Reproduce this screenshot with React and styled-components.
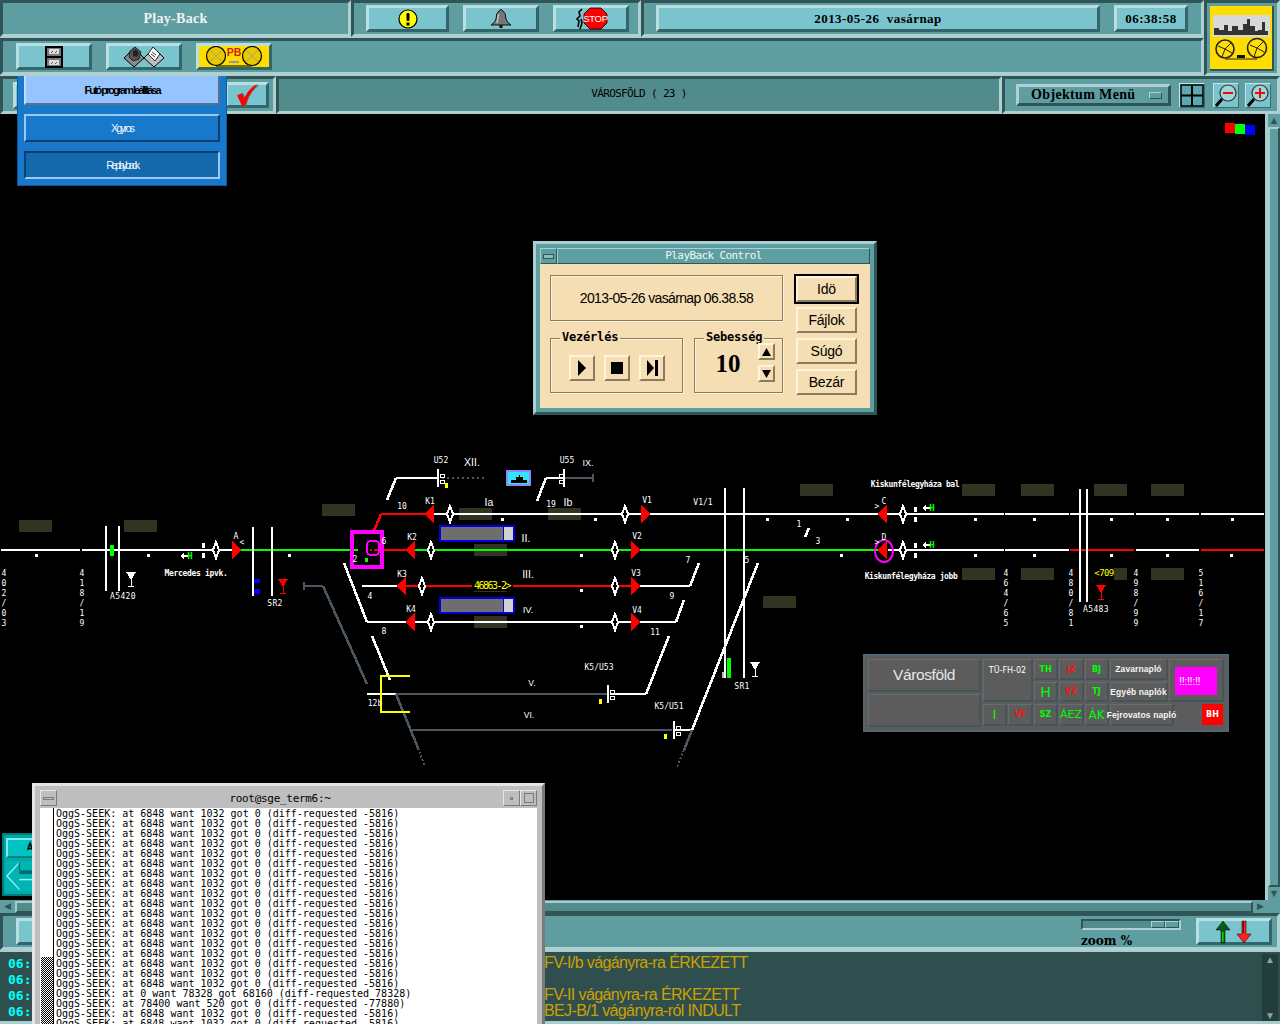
import styled, { createGlobalStyle, css } from 'styled-components';

const GlobalStyle = createGlobalStyle`
  html, body { margin: 0; padding: 0; background: #000; }
  body { font-family: "Liberation Sans", sans-serif; }
`;

const raised = (light, dark, w = 3) => css`
  border-style: solid;
  border-width: ${w}px;
  border-color: ${light} ${dark} ${dark} ${light};
  box-sizing: border-box;
`;

const Screen = styled.div`
  position: relative;
  width: 1280px;
  height: 1024px;
  overflow: hidden;
  background: #5f9ea0;
  display: flex;
  flex-direction: column;
`;

const TopGrid = styled.div`
  display: flex;
  height: 76px;
  flex: none;
`;
const TopLeft = styled.div`
  width: 1204px;
  display: flex;
  flex-direction: column;
`;
const TopRow = styled.div`
  display: flex;
  height: 38px;
  background: #a8cdce;
`;
const Panel = styled.div`
  ${raised('#2f5556', '#aed0d1')}
  background: ${p => p.$dark ? '#528b8b' : '#5f9ea0'};
  height: ${p => p.$h || 38}px;
  width: ${p => p.$w ? p.$w + 'px' : 'auto'};
  flex: ${p => p.$w ? 'none' : 1};
  display: flex;
  align-items: center;
  padding-left: ${p => p.$pl || 0}px;
  gap: ${p => p.$gap || 0}px;
  justify-content: ${p => p.$center ? 'center' : 'flex-start'};
`;
const Title = styled.span`
  font: bold 14px "Liberation Serif", serif;
  letter-spacing: 0.3px;
  color: #f2f2f2;
`;
const Button = styled.div`
  ${raised('#b9dfe3', '#33666a')}
  background: ${p => p.$yellow ? '#ffdd00' : '#7ac5cd'};
  width: ${p => p.$w || 76}px;
  height: ${p => p.$h || 27}px;
  flex: none;
  display: flex;
  align-items: center;
  justify-content: center;
`;
const DateText = styled.span`
  font: bold 13px "Liberation Serif", serif;
  letter-spacing: 0.45px;
  color: #000;
  white-space: pre;
`;
const LogoPanel = styled(Panel)`
  width: 76px;
  height: 76px;
  flex: none;
  padding: 4px 3px 3px 3px;
  justify-content: center;
`;
const LogoFace = styled.div`
  width: 62px;
  height: 63px;
  background: #ffdd00;
  border-right: 2px solid #2f5556;
  border-bottom: 2px solid #2f5556;
  display: flex;
`;
const ThirdRow = styled.div`
  display: flex;
  height: 38px;
  flex: none;
  background: #a8cdce;
`;
const RegionText = styled.span`
  font: 11px "DejaVu Sans Mono", monospace;
  letter-spacing: -0.65px;
  color: #000;
  white-space: pre;
  padding-bottom: 4px;
`;
const OptionMenu = styled.div`
  ${raised('#aed0d1', '#2f5556')}
  width: 155px;
  height: 22px;
  display: flex;
  align-items: center;
  justify-content: space-between;
  padding: 0 6px 0 12px;
  font: bold 14px "Liberation Serif", serif;
  letter-spacing: 0.35px;
  margin-right: 8px;
`;
const OptionMark = styled.i`
  ${raised('#aed0d1', '#2f5556', 1)}
  width: 13px;
  height: 7px;
  background: #5f9ea0;
`;
const IconButton = styled.div`
  ${raised('#c4e3e6', '#3a6d70', 1)}
  width: 26px;
  height: 25px;
  background: #7ac5cd;
  margin-right: ${p => p.$mr || 0}px;
  flex: none;
  display: flex;
`;

const Middle = styled.div`
  display: flex;
  height: 786px;
  flex: none;
`;
const Canvas = styled.div`
  width: 1265px;
  height: 786px;
  background: #000;
  flex: none;
`;
const VScroll = styled.div`
  width: 15px;
  background: #528b8b;
  border-left: 3px solid #a8cdce;
  box-sizing: border-box;
  display: flex;
  flex-direction: column;
`;
const VArrow = styled.div`
  height: 13px;
  flex: none;
  background: #5f9ea0;
  color: #2f5556;
  font-size: 11px;
  line-height: 13px;
  text-align: center;
`;
const VThumb = styled.div`
  ${raised('#a8cdce', '#2f5556', 2)}
  flex: 1;
  background: #5f9ea0;
`;
const HScroll = styled.div`
  height: 13px;
  flex: none;
  display: flex;
  align-items: center;
  padding: 0 14px 0 2px;
  background: #5f9ea0;
  gap: 2px;
`;
const HArrow = styled.div`
  width: 11px;
  height: 11px;
  color: #2f5556;
  font-size: 9px;
  line-height: 11px;
  text-align: center;
  flex: none;
`;
const HThumb = styled.div`
  ${raised('#a8cdce', '#2f5556', 2)}
  flex: 1;
  height: 12px;
  background: #528b8b;
`;
const Toolbar = styled.div`
  ${raised('#2f5556', '#aed0d1')}
  height: 37px;
  flex: none;
  display: flex;
  align-items: center;
  padding: 0 5px 0 13px;
  background: #5f9ea0;
`;
const ZoomBox = styled.div`
  margin-left: auto;
  width: 100px;
  margin-right: 15px;
  padding-top: 3px;
  display: flex;
  flex-direction: column;
  gap: 5px;
`;
const Slider = styled.div`
  ${raised('#2f5556', '#aed0d1', 2)}
  width: 100px;
  height: 11px;
  background: #528b8b;
  display: flex;
  justify-content: flex-end;
`;
const SliderThumb = styled.i`
  ${raised('#aed0d1', '#2f5556', 1)}
  width: 14px;
  height: 7px;
  background: #5f9ea0;
`;
const ZoomLabel = styled.span`
  font: bold 12px "DejaVu Serif", serif;
  color: #000;
  line-height: 12px;
`;
const Log = styled.div`
  flex: 1;
  background: #2f4f4f;
  border-top: 2px solid #a8cdce;
  border-bottom: 3px solid #a8cdce;
  padding-top: 3px;
  display: flex;
  position: relative;
`;
const LogLines = styled.div`
  display: flex;
  flex-direction: column;
`;
const LogLine = styled.div`
  display: flex;
  height: 16px;
  align-items: center;
`;
const LogTime = styled.span`
  width: 544px;
  padding-left: 8px;
  box-sizing: border-box;
  font: bold 13px "DejaVu Sans Mono", monospace;
  color: #00ffff;
`;
const LogMessage = styled.span`
  font: 16px "Liberation Sans", sans-serif;
  letter-spacing: -0.62px;
  color: #cda000;
  white-space: pre;
`;
const LogScroll = styled.div`
  position: absolute;
  right: 2px;
  top: 2px;
  bottom: 0;
  width: 16px;
  background: #233c3c;
  display: flex;
  flex-direction: column;
  justify-content: space-between;
  align-items: center;
  color: #7fa8a8;
  font-size: 10px;
`;

/* floating parts */
const Menu = styled.div`
  position: absolute;
  left: 17px;
  top: 76px;
  width: 210px;
  height: 110px;
  box-sizing: border-box;
  background: #1878cc;
  border: 1px solid #0f5a9c;
  border-top: none;
  padding: 0 6px;
  display: flex;
  flex-direction: column;
  gap: 9px;
`;
const MenuItem = styled.div`
  height: ${p => p.$h || 28}px;
  box-sizing: border-box;
  border-style: solid;
  border-width: 2px;
  border-top-width: ${p => p.$first ? 0 : 2}px;
  border-color: ${p => p.$pressed ? '#0a3f70 #9cc8f0 #9cc8f0 #0a3f70' : p.$first ? '#b8d8ff #5a7090 #5a7090 #c4deff' : '#9cc8f0 #0a3f70 #0a3f70 #9cc8f0'};
  background: ${p => p.$first ? '#96c4ff' : p.$pressed ? '#1468ac' : '#1878cc'};
  color: ${p => p.$first ? '#000' : '#e8f4ff'};
  display: flex;
  align-items: center;
  justify-content: center;
  font: ${p => p.$first ? 'bold' : 'normal'} 11px "Liberation Sans", sans-serif;
  letter-spacing: ${p => p.$ls ?? -2}px;
  white-space: pre;
`;

const Dialog = styled.div`
  position: absolute;
  left: 533px;
  top: 241px;
  width: 344px;
  height: 174px;
  box-sizing: border-box;
  background: #5f9ea0;
  border-style: solid;
  border-width: 3px;
  border-color: #a8d0d2 #2f5556 #2f5556 #a8d0d2;
  padding: 4px;
  display: flex;
  flex-direction: column;
`;
const DialogTitle = styled.div`
  height: 16px;
  flex: none;
  display: flex;
  align-items: center;
  font: 11px "DejaVu Sans Mono", monospace;
  letter-spacing: -0.6px;
  color: #f0f8f8;
`;
const DialogMenuBtn = styled.i`
  ${raised('#a8d0d2', '#2f5556', 1)}
  width: 17px;
  height: 16px;
  display: flex;
  align-items: center;
  justify-content: center;
  &::after { content: ''; width: 9px; height: 3px; border: 1px solid #2f5556; background: #8fbcbe; }
`;
const DialogTitleText = styled.span`
  ${raised('#a8d0d2', '#2f5556', 1)}
  flex: 1;
  height: 16px;
  line-height: 14px;
  text-align: center;
`;
const DialogBody = styled.div`
  flex: 1;
  background: #f5deb3;
  padding: 10px 12px 0 10px;
  display: flex;
  gap: 11px;
`;
const DialogLeft = styled.div`
  width: 233px;
  margin-top: 1px;
  display: flex;
  flex-direction: column;
  gap: 17px;
`;
const Etched = styled.div`
  border: 1px solid #8b7b5e;
  box-shadow: 1px 1px 0 #fff3d8, inset 1px 1px 0 #fff3d8;
  box-sizing: border-box;
`;
const Stamp = styled(Etched)`
  height: 46px;
  display: flex;
  align-items: center;
  justify-content: center;
  font: 14px "Liberation Sans", sans-serif;
  letter-spacing: -0.65px;
  color: #000;
`;
const GroupRow = styled.div`
  display: flex;
  gap: 11px;
`;
const Group = styled(Etched)`
  position: relative;
  width: ${p => p.$w}px;
  height: 55px;
  display: flex;
  align-items: center;
  gap: ${p => p.$gap || 0}px;
  padding: 4px 0 0 ${p => p.$pl || 0}px;
`;
const GroupLabel = styled.span`
  position: absolute;
  left: ${p => p.$l}px;
  top: -9px;
  background: #f5deb3;
  padding: 0 2px;
  font: bold 12px "DejaVu Sans Mono", monospace;
  letter-spacing: -0.2px;
  line-height: 14px;
  white-space: pre;
`;
const TapeBtn = styled.div`
  ${raised('#fff3d8', '#8b7b5e', 2)}
  background: #f5deb3;
  width: 26px;
  height: 26px;
  display: flex;
  align-items: center;
  justify-content: center;
`;
const Speed = styled.span`
  font: bold 25px "Liberation Serif", serif;
  width: 66px;
  text-align: center;
  margin-top: -7px;
`;
const SpinCol = styled.div`
  position: absolute;
  left: 63px;
  top: 4px;
  display: flex;
  flex-direction: column;
  gap: 5px;
`;
const SpinBtn = styled(TapeBtn)`
  width: 17px;
  height: 17px;
`;
const DialogButtons = styled.div`
  flex: none;
  width: 65px;
  display: flex;
  flex-direction: column;
  align-items: center;
  gap: 5px;
`;
const DefaultRing = styled.div`
  border: 2px solid #000;
  margin-bottom: -2px;
`;
const DlgButton = styled.div`
  ${raised('#fff3d8', '#8b7b5e', 2)}
  width: ${p => p.$w || 61}px;
  height: ${p => p.$h || 26}px;
  background: #f5deb3;
  font: 14px "Liberation Sans", sans-serif;
  letter-spacing: -0.2px;
  color: #000;
  display: flex;
  align-items: center;
  justify-content: center;
`;

const Terminal = styled.div`
  position: absolute;
  left: 32px;
  top: 783px;
  width: 513px;
  height: 260px;
  box-sizing: border-box;
  background: #bebebe;
  border-style: solid;
  border-width: 3px;
  border-color: #e4e4e4 #7a7a7a #7a7a7a #e4e4e4;
  padding: 4px 5px 0 5px;
  display: flex;
  flex-direction: column;
`;
const TermTitle = styled.div`
  height: 16px;
  flex: none;
  display: flex;
  align-items: center;
  margin-bottom: 2px;
  font: 11px "DejaVu Sans Mono", monospace;
  letter-spacing: -0.3px;
`;
const TermBtn = styled.i`
  ${raised('#e8e8e8', '#7a7a7a', 1)}
  width: ${p => p.$w || 17}px;
  height: 16px;
  flex: none;
  display: flex;
  align-items: center;
  justify-content: center;
  &::after {
    content: '';
    width: ${p => p.$mw}px;
    height: ${p => p.$mh}px;
    border: 1px solid #7a7a7a;
  }
`;
const TermTitleText = styled.span`
  flex: 1;
  text-align: center;
  font-style: normal;
`;
const TermBody = styled.div`
  flex: 1;
  background: #fff;
  display: flex;
  overflow: hidden;
`;
const TermGutter = styled.div`
  width: 13px;
  flex: none;
  border-right: 1px solid #000;
  display: flex;
  flex-direction: column;
  justify-content: flex-end;
`;
const TermThumb = styled.div`
  height: 83px;
  margin-left: 1px;
  background: repeating-conic-gradient(#000 0 25%, #fff 0 50%) 0 0 / 2px 2px;
`;
const TermText = styled.pre`
  margin: 0;
  padding: 1px 0 0 2px;
  font: 10px/10px "DejaVu Sans Mono", monospace;
  color: #000;
`;

const InfoPanel = styled.div`
  position: absolute;
  left: 863px;
  top: 654px;
  width: 366px;
  height: 78px;
  box-sizing: border-box;
  background: #5c5c5c;
  border: 2px solid #4e6672;
  padding: 3px;
  display: flex;
  gap: 2px;
`;
const InfoLeft = styled.div`
  width: 113px;
  display: flex;
  flex-direction: column;
  gap: 2px;
`;
const cellBevel = css`
  border: 1px solid;
  border-width: 1px 2px 2px 1px;
  border-color: #6c6c6c #46545c #46545c #6c6c6c;
  box-sizing: border-box;
`;
const InfoName = styled.div`
  ${cellBevel}
  flex: ${p => p.$grow};
  display: flex;
  align-items: center;
  justify-content: center;
  color: #e8e8e8;
  font: 15.5px "Liberation Sans", sans-serif;
  letter-spacing: -0.4px;
`;
const InfoGrid = styled.div`
  flex: 1;
  display: grid;
  grid-template-columns: 24px 25px 24px 25px 24px 58px 5px 49px;
  grid-template-rows: 21px 20px 22px;
  gap: 2px 1px;
`;
const InfoCell = styled.div`
  ${cellBevel}
  grid-column: ${p => p.$col || 'auto'};
  grid-row: ${p => p.$row || 'auto'};
  display: flex;
  align-items: center;
  justify-content: center;
  color: ${p => p.$c || '#fff'};
  font: ${p => p.$thin ? 'normal' : 'bold'} ${p => p.$fs || 8}px "DejaVu Sans", sans-serif;
  white-space: pre;
`;
const LogCell = styled(InfoCell)`
  font: bold 8.5px "Liberation Sans", sans-serif;
  letter-spacing: 0.1px;
  color: #f4f4f4;
`;
const StationCode = styled(InfoCell)`
  align-items: flex-start;
  padding-top: 6px;
  font: 8px "DejaVu Sans", sans-serif;
`;
const AlarmCell = styled(InfoCell)`
  padding: 7px 5px 5px 5px;
`;
const AlarmBox = styled.div`
  width: 100%;
  height: 100%;
  background: #ff00ff;
  color: #fff;
  font: 11px "Liberation Sans", sans-serif;
  letter-spacing: -0.4px;
  display: flex;
  align-items: center;
  padding-left: 4px;
  box-sizing: border-box;
`;
const RedBlock = styled.div`
  grid-column: 8;
  grid-row: 3;
  justify-self: end;
  width: 21px;
  height: 21px;
  background: #ff0000;
  color: #fff;
  font: bold 8px "DejaVu Sans", sans-serif;
  display: flex;
  align-items: center;
  justify-content: center;
  margin-right: 1px;
`;

const SideWidget = styled.div`
  position: absolute;
  left: 2px;
  top: 833px;
  width: 50px;
  height: 63px;
  box-sizing: border-box;
  background: #00a8a8;
  border: 2px solid #007c7c;
  padding: 3px 0 0 2px;
  display: flex;
  flex-direction: column;
  gap: 2px;
`;
const SideButton = styled.div`
  ${raised('#7cecec', '#008080', 2)}
  height: 20px;
  flex: none;
  background: #00c4c4;
  font: bold 8px "DejaVu Sans", sans-serif;
  padding: 3px 0 0 19px;
`;
const SideArrow = styled.div`
  height: 32px;
  flex: none;
  display: flex;
`;

const RailSvg = styled.svg`
  display: block;
`;
const Lbl = styled.text`
  font-family: ${p => p.$sans ? '"Liberation Sans", sans-serif' : '"DejaVu Sans Mono", monospace'};
  font-size: ${p => p.$fs || 8}px;
  fill: ${p => p.$c || '#fff'};
  font-weight: ${p => p.$b ? 'bold' : 'normal'};
  letter-spacing: ${p => p.$ls ?? 0}px;
  text-anchor: middle;
  dominant-baseline: central;
`;

const W = '#fff', R = '#ff0000', G = '#00ff00', GR = '#4a5560';

const tracks = [
  [1, 550, 80, 550, W], [82, 550, 241, 550, W], [241, 550, 352, 550, G], [352, 550, 358, 550, G],
  [375, 550, 410, 550, R], [415, 550, 880, 550, G], [888, 550, 1004, 550, W], [1005, 550, 1069, 550, W],
  [1070, 550, 1134, 550, R], [1136, 550, 1199, 550, W], [1201, 550, 1264, 550, R],
  [373, 533, 381, 514, R], [381, 514, 426, 514, R], [434, 514, 1004, 514, W], [1005, 514, 1069, 514, W],
  [1070, 514, 1134, 514, W], [1136, 514, 1199, 514, W], [1201, 514, 1264, 514, W],
  [387, 500, 396, 478, W], [396, 478, 438, 478, W], [537, 501, 546, 478, W], [546, 478, 563, 478, W],
  [362, 586, 398, 586, W], [406, 586, 631, 586, R], [640, 586, 690, 586, W], [690, 586, 699, 563, W],
  [344, 563, 367, 622, W], [367, 622, 408, 622, W], [415, 622, 631, 622, W], [640, 622, 676, 622, W], [676, 622, 684, 600, W],
  [372, 636, 390, 680, W], [367, 694, 396, 694, W], [610, 694, 646, 694, W], [646, 694, 669, 636, W],
  [673, 730, 692, 730, W], [692, 730, 758, 563, W], [805, 537, 809, 528, W],
  [725, 488, 725, 678, W], [744, 488, 744, 678, W], [106, 526, 106, 591, W], [119, 526, 119, 591, W],
  [253, 527, 253, 596, W], [272, 527, 272, 596, W], [1080, 489, 1080, 602, W], [1087, 489, 1087, 602, W],
  [304, 586, 323, 586, GR], [323, 586, 367, 684, GR], [304, 582, 304, 590, GR], [396, 694, 607, 694, GR],
  [396, 694, 418, 748, GR], [412, 730, 672, 730, GR], [692, 730, 684, 750, GR], [565, 478, 593, 478, GR], [593, 474, 593, 482, GR],
];

const olives = [
  [19, 520], [124, 520], [322, 504], [459, 508], [548, 508], [474, 544], [474, 616], [800, 484], [763, 596],
  [962, 484], [1021, 484], [1094, 484], [1151, 484], [962, 568], [1021, 568], [1094, 568], [1151, 568],
];
const dots = [
  [36, 555], [148, 555], [289, 555], [502, 519], [595, 519], [767, 519], [847, 519], [581, 555], [841, 555], [581, 590], [581, 626],
  [975, 519], [1034, 519], [1111, 519], [1167, 519], [1232, 519], [975, 555], [1034, 555], [1111, 555], [1167, 555], [1231, 555],
];
const diamonds = [[216, 550], [450, 514], [431, 550], [422, 586], [431, 622], [625, 514], [615, 550], [615, 586], [615, 622], [903, 514], [903, 550]];
const signals = [
  [232, 550, 1], [641, 514, 1], [631, 550, 1], [631, 586, 1], [631, 622, 1],
  [434, 514, -1], [415, 550, -1], [406, 586, -1], [415, 622, -1], [887, 514, -1], [887, 550, -1],
];
const labels = [
  ['10', 402, 506], ['K1', 430, 501], ['6', 384, 541], ['2', 355, 559], ['K2', 412, 537], ['K3', 402, 574], ['4', 370, 596], ['K4', 411, 609], ['8', 384, 631], ['12b', 375, 703],
  ['A', 236, 536], ['<', 242, 542], ['U52', 441, 460], ['U55', 567, 460], ['19', 551, 504], ['V1', 647, 500],
  ['V1/1', 703, 502], ['V2', 637, 536], ['V3', 636, 573], ['V4', 637, 610], ['7', 688, 560], ['9', 672, 596], ['11', 655, 632], ['5', 747, 560],
  ['1', 799, 524], ['3', 818, 541], ['K5/U53', 599, 667], ['K5/U51', 669, 706], ['C', 884, 501], ['>', 877, 506], ['D', 884, 537], ['>', 877, 542],
];
const wideLabels = [['A5420', 123, 596], ['SR2', 275, 603], ['SR1', 742, 686], ['A5483', 1096, 609]];
const romans = [
  ['XII.', 472, 462, 10.5], ['IX.', 588, 463, 9], ['Ia', 489, 502, 10.5], ['Ib', 568, 502, 10.5], ['II.', 526, 538, 10.5],
  ['III.', 528, 574, 10.5], ['IV.', 528, 609, 9.5], ['V.', 532, 683, 8.5], ['VI.', 529, 715, 8.5],
];
const numberColumns = [[4, '402/03'], [82, '418/19'], [1006, '464/65'], [1071, '480/81'], [1136, '498/99'], [1201, '516/17']];

const Glass = ({ x, y, c }) => (
  <g>
    <polygon points={`${x - 5},${y} ${x + 5},${y} ${x},${y + 8}`} fill={c} />
    <rect x={x - 0.5} y={y + 6} width="1" height="8" fill={c} />
    <rect x={x - 3} y={y + 14} width="6" height="1" fill={c} />
  </g>
);

const TrainBar = ({ y }) => (
  <g>
    <rect x="440" y={y + 1} width="74" height="15" fill="#6e6e6e" stroke="#0000dd" strokeWidth="2" />
    <rect x="504" y={y + 2} width="9" height="13" fill="#d0d0d0" />
    <rect x="503" y={y + 1} width="1" height="15" fill="#0000dd" />
  </g>
);

const Stop = ({ x, y }) => (
  <g>
    <rect x={x} y={y - 9} width="2" height="18" fill="#fff" />
    <rect x={x - 4} y={y - 4} width="4" height="3" fill="#000" stroke="#fff" strokeWidth="1" />
    <rect x={x - 4} y={y + 2} width="4" height="3" fill="#000" stroke="#fff" strokeWidth="1" />
  </g>
);

const StopRight = ({ x, y }) => (
  <g>
    <rect x={x} y={y - 9} width="2" height="18" fill="#fff" />
    <rect x={x + 3} y={y - 4} width="4" height="3" fill="#000" stroke="#fff" strokeWidth="1" />
    <rect x={x + 3} y={y + 2} width="4" height="3" fill="#000" stroke="#fff" strokeWidth="1" />
  </g>
);

const Hm = ({ x, y }) => (
  <g>
    <rect x={x} y={y - 1} width="7" height="2" fill="#fff" />
    <polygon points={`${x - 1},${y} ${x + 3},${y - 3} ${x + 3},${y + 3}`} fill="#fff" />
    <Lbl x={x + 9} y={y} $fs={9} $b $c={G}>H</Lbl>
  </g>
);

function RailMap() {
  return (
    <RailSvg width="1265" height="786" viewBox="0 114 1265 786" shapeRendering="crispEdges">
      <rect x="1225" y="123" width="10" height="10" fill="#ff0000" />
      <rect x="1235" y="124" width="10" height="10" fill="#00ff00" />
      <rect x="1245" y="125" width="10" height="10" fill="#0000ff" />

      {olives.map(([x, y], i) => <rect key={i} x={x} y={y} width="33" height="12" fill="#333322" />)}
      {tracks.map(([x1, y1, x2, y2, c], i) => (
        <line key={i} x1={x1} y1={y1} x2={x2} y2={y2} stroke={c} strokeWidth={x1 !== x2 && y1 !== y2 ? 2.6 : 2} />
      ))}
      <line x1="442" y1="478" x2="487" y2="478" stroke={GR} strokeWidth="2" strokeDasharray="2 3" />
      <line x1="418" y1="748" x2="425" y2="767" stroke={GR} strokeWidth="2" strokeDasharray="2 2" />
      <line x1="684" y1="750" x2="677" y2="767" stroke={GR} strokeWidth="2" strokeDasharray="2 2" />
      {dots.map(([x, y], i) => <rect key={i} x={x - 1} y={y - 1} width="3" height="3" fill="#fff" />)}
      {diamonds.map(([x, y], i) => (
        <polygon key={i} points={`${x},${y - 8} ${x + 3},${y} ${x},${y + 8} ${x - 3},${y}`} fill="#000" stroke="#fff" strokeWidth="2" />
      ))}
      {signals.map(([x, y, d], i) => (
        <polygon key={i} points={`${x},${y - 10} ${x + d * 9},${y} ${x},${y + 10}`} fill="#ff0000" />
      ))}

      <rect x="110" y="545" width="4" height="11" fill="#00ff00" />
      <rect x="727" y="658" width="4" height="20" fill="#00ff00" />
      <rect x="722" y="672" width="2" height="6" fill="#bbb" />
      <rect x="254" y="579" width="6" height="4" fill="#0000ff" />
      <rect x="254" y="589" width="6" height="5" fill="#0000ff" />
      <Glass x={131} y={572} c="#fff" />
      <Glass x={283} y={579} c="#ff0000" />
      <Glass x={755} y={662} c="#fff" />
      <Glass x={1101} y={585} c="#ff0000" />

      {[[203, 550], [915, 514], [915, 550]].map(([x, y]) => (
        <g key={x + '' + y}>
          <rect x={x - 1} y={y - 7} width="3" height="5" fill="#fff" />
          <rect x={x - 1} y={y + 3} width="3" height="5" fill="#fff" />
        </g>
      ))}
      <Hm x={181} y={556} />
      <Hm x={923} y={508} />
      <Hm x={923} y={545} />

      <rect x="352" y="532" width="30" height="35" fill="none" stroke="#ff00ff" strokeWidth="4" />
      <rect x="367" y="541" width="12" height="14" rx="4" fill="none" stroke="#ff00ff" strokeWidth="2" />
      <rect x="370" y="549" width="2" height="2" fill="#ff0000" />
      <rect x="374" y="549" width="2" height="2" fill="#ff0000" />
      <rect x="365" y="558" width="3" height="4" fill="#00ff00" />
      <ellipse cx="884" cy="551" rx="9" ry="11" fill="none" stroke="#ff00ff" strokeWidth="2" shapeRendering="auto" />

      <polyline points="410,676 381,676 381,712 410,712" fill="none" stroke="#ffff00" strokeWidth="2" />

      <StopRight x={437} y={478} />
      <Stop x={563} y={478} />
      <StopRight x={607} y={694} />
      <StopRight x={673} y={730} />
      {[[445, 483], [599, 699], [664, 734]].map(([x, y]) => <rect key={x} x={x} y={y} width="3" height="5" fill="#ffff00" />)}

      <rect x="507" y="471" width="23" height="14" fill="#33e4ff" stroke="#8a8aff" strokeWidth="2" />
      <polygon points="511,480 516,480 516,477 519,477 519,475 520,475 520,477 523,477 523,480 527,480 527,483 511,483" fill="#000" />

      <TrainBar y={525} />
      <TrainBar y={597} />

      <rect x="472" y="578" width="41" height="12" fill="#000" />
      <rect x="474" y="591" width="33" height="1" fill="#333322" />
      <Lbl x={492} y={585} $c="#ffff00" $fs={10} $ls={-1.5}>46863-2&gt;</Lbl>
      <rect x="1094" y="568" width="20" height="12" fill="#000" />
      <Lbl x={1104} y={573} $c="#ffff00" $fs={9} $ls={-0.6}>&lt;709</Lbl>

      {labels.map(([t, x, y], i) => <Lbl key={i} x={x} y={y}>{t}</Lbl>)}
      {wideLabels.map(([t, x, y]) => <Lbl key={t} x={x} y={y} $ls={0.4}>{t}</Lbl>)}
      {romans.map(([t, x, y, fs]) => <Lbl key={t} x={x} y={y} $sans $fs={fs}>{t}</Lbl>)}
      {numberColumns.map(([x, s]) => s.split('').map((ch, i) => (
        <Lbl key={x + '-' + i} x={x} y={573 + i * 10}>{ch}</Lbl>
      )))}
      <Lbl x={196} y={573} $b $ls={-0.3}>Mercedes ipvk.</Lbl>
      <Lbl x={915} y={484} $b $ls={-0.4}>Kiskunfélegyháza bal</Lbl>
      <Lbl x={911} y={576} $b $ls={-0.4}>Kiskunfélegyháza jobb</Lbl>
    </RailSvg>
  );
}

/* toolbar icons */
const IconAlert = () => (
  <svg width="20" height="20" viewBox="0 0 20 20">
    <circle cx="10" cy="10" r="9" fill="#ffff00" stroke="#000" strokeWidth="1.2" />
    <rect x="8.5" y="4" width="3" height="8" rx="1" fill="#000" />
    <rect x="8.5" y="13.5" width="3" height="3" fill="#000" />
  </svg>
);
const IconBell = () => (
  <svg width="22" height="21" viewBox="0 0 22 21">
    <path d="M9 3 Q11 0 13 3 Q16 5 16 11 Q17 15 21 17 L1 17 Q5 15 6 11 Q6 5 9 3Z" fill="#777" stroke="#111" strokeWidth="1" />
    <rect x="9.5" y="17" width="3" height="3" fill="#111" />
    <path d="M8.5 6 L7 15" stroke="#ccc" strokeWidth="1.4" />
  </svg>
);
const IconStop = () => (
  <svg width="34" height="24" viewBox="0 0 34 24">
    <path d="M4 20 L5 14 L3 12 L6 9 L5 5 L8 2" fill="none" stroke="#000" strokeWidth="1.6" />
    <path d="M7 12 L8 16 L6 22" fill="none" stroke="#000" strokeWidth="1.6" />
    <polygon points="16,1 27,1 33,7 33,16 27,22 16,22 10,16 10,7" fill="#ff0000" stroke="#000" strokeWidth="0.8" />
    <text x="21.5" y="15" textAnchor="middle" fontFamily="Liberation Sans" fontSize="9.5" letterSpacing="-0.3" fill="#fff">STOP</text>
  </svg>
);
const IconDrawer = () => (
  <svg width="24" height="24" viewBox="0 0 24 24">
    <rect x="3" y="1" width="18" height="22" fill="#000" />
    <rect x="5" y="3" width="14" height="8" fill="#7a7a7a" />
    <rect x="5" y="13" width="14" height="8" fill="#7a7a7a" />
    <rect x="7" y="4" width="10" height="5" fill="#ddd" />
    <rect x="7" y="15" width="10" height="5" fill="#ddd" />
    <path d="M9 8 L11 6 M13 8 L15 6 M9 19 L11 17 M13 19 L15 17" stroke="#333" strokeWidth="0.8" />
  </svg>
);
const IconBooks = () => (
  <svg width="42" height="22" viewBox="0 0 42 22">
    <polygon points="11,2 21,12 11,21 1,12" fill="#8a8a8a" stroke="#000" />
    <polygon points="7,5 12,1 18,6 16,13 10,15 6,11" fill="#555" stroke="#000" strokeWidth="0.7" />
    <polygon points="10,5 13,3 16,7 14,11 10,10" fill="#222" />
    <polygon points="31,2 41,12 31,21 21,12" fill="#bdbdbd" stroke="#000" />
    <polygon points="30,1 37,8 32,15 25,8" fill="#fff" stroke="#000" strokeWidth="0.8" />
    <path d="M29 6 L33 9 M28 8 L32 11" stroke="#444" strokeWidth="1" />
  </svg>
);
const IconTape = () => (
  <svg width="60" height="22" viewBox="0 0 60 22">
    <circle cx="12" cy="10" r="9.5" fill="#e8c800" stroke="#000" strokeWidth="1.2" />
    <circle cx="48" cy="10" r="9.5" fill="#e8c800" stroke="#000" strokeWidth="1.2" />
    <path d="M6 4 L18 16 M18 4 L6 16 M42 4 L54 16 M54 4 L42 16" stroke="#999" strokeWidth="0.8" />
    <text x="30" y="10" textAnchor="middle" fontFamily="Liberation Sans" fontWeight="bold" fontSize="10.5" fill="#d02020">PB</text>
    <rect x="25" y="15" width="10" height="2" fill="#999" />
    <path d="M12 20 H48" stroke="#000" strokeWidth="1.2" />
  </svg>
);
const IconCheck = () => (
  <svg width="26" height="26" viewBox="0 0 26 26">
    <path d="M5 12 L9 11 L11 15 Q15 7 25 2 L23 5 Q15 11 12 25 L10 25Z" fill="#666" />
    <path d="M3 13 L8 12 L10 17 Q14 7 23 2 L20 7 Q14 13 11 24 L8 24Z" fill="#ff0000" />
  </svg>
);
const IconGrid = () => (
  <svg width="24" height="23" viewBox="0 0 24 23">
    <rect x="1" y="1" width="22" height="21" fill="#5fa8b0" stroke="#000" strokeWidth="1.5" />
    <path d="M12 1 V22 M1 11.5 H23" stroke="#000" strokeWidth="2" />
  </svg>
);
const IconZoom = ({ plus }) => (
  <svg width="24" height="23" viewBox="0 0 24 23">
    <circle cx="14" cy="9" r="8" fill="#9fd6da" stroke="#333" strokeWidth="1.2" />
    <path d="M8 15 L2 22" stroke="#000" strokeWidth="3" />
    <rect x="9" y="8" width="10" height="2" fill="#ff0000" />
    {plus && <rect x="13" y="4" width="2" height="10" fill="#ff0000" />}
  </svg>
);
const IconArrows = () => (
  <svg width="36" height="24" viewBox="0 0 36 24">
    <polygon points="7,1 14,10 9,10 9,23 5,23 5,10 0,10" fill="#0a5a1a" stroke="#000" strokeWidth="0.5" />
    <rect x="6" y="12" width="1.5" height="10" fill="#00e000" />
    <polygon points="28,23 35,14 30,14 30,1 26,1 26,14 21,14" fill="#ff2020" stroke="#000" strokeWidth="0.5" />
    <rect x="26.5" y="2" width="1.5" height="11" fill="#800000" />
  </svg>
);
const IconBack = () => (
  <svg width="46" height="32" viewBox="0 0 46 32">
    <rect width="46" height="32" fill="#00b4b4" />
    <path d="M14 2 L1 16 L14 30" fill="none" stroke="#8ff4f4" strokeWidth="1.4" />
    <rect x="14" y="10" width="32" height="4" fill="#006e6e" />
    <rect x="14" y="19" width="32" height="1.5" fill="#8ff4f4" />
    <path d="M14 2 V10" stroke="#006e6e" strokeWidth="1.5" />
  </svg>
);
const LogoArt = () => (
  <svg width="62" height="63" viewBox="0 0 62 63">
    <rect x="3" y="9" width="57" height="22" fill="#d8d8d8" />
    <path d="M4 29 V22 H9 V24 H14 V19 H18 V25 H22 V20 H28 V24 H33 V18 H37 V13 H40 V20 H45 V25 H48 V24 H52 V16 H55 V25 H58 V29Z" fill="#333" />
    <circle cx="15" cy="43" r="9" fill="#ffdd00" stroke="#222" strokeWidth="1.6" />
    <circle cx="47" cy="42" r="9.5" fill="#ffdd00" stroke="#222" strokeWidth="1.6" />
    <path d="M15 43 L8 40 M15 43 L21 37 M15 43 L12 51 M15 43 L22 47 M47 42 L40 39 M47 42 L53 36 M47 42 L44 51 M47 42 L54 46" stroke="#222" strokeWidth="1" />
    <path d="M15 53 H47" stroke="#222" strokeWidth="1" />
    <rect x="27" y="49" width="8" height="3" fill="#111" />
  </svg>
);

const termLine = 'OggS-SEEK: at 6848 want 1032 got 0 (diff-requested -5816)';
const termLines = [
  ...Array(18).fill(termLine),
  'OggS-SEEK: at 0 want 78328 got 68160 (diff-requested 78328)',
  'OggS-SEEK: at 78400 want 520 got 0 (diff-requested -77880)',
  termLine,
  termLine,
];

const logLines = [
  'FV-I/b vágányra-ra ÉRKEZETT',
  '',
  'FV-II vágányra-ra ÉRKEZETT',
  'BEJ-B/1 vágányra-ról INDULT',
];

function App() {
  return (
    <Screen>
      <GlobalStyle />
      <TopGrid>
        <TopLeft>
          <TopRow>
            <Panel $w={351} $center $h={37}><Title>Play-Back</Title></Panel>
            <Panel $w={290} $h={37} $pl={12} $gap={14}>
              <Button $w={83}><IconAlert /></Button>
              <Button><IconBell /></Button>
              <Button><IconStop /></Button>
            </Panel>
            <Panel $h={37} $pl={12} $gap={14}>
              <Button $w={444}><DateText>2013-05-26  vasárnap</DateText></Button>
              <Button $w={74}><DateText>06:38:58</DateText></Button>
            </Panel>
          </TopRow>
          <TopRow>
            <Panel $h={37} $pl={13} $gap={14}>
              <Button><IconDrawer /></Button>
              <Button><IconBooks /></Button>
              <Button $yellow><IconTape /></Button>
            </Panel>
          </TopRow>
        </TopLeft>
        <LogoPanel><LogoFace><LogoArt /></LogoFace></LogoPanel>
      </TopGrid>
      <ThirdRow>
        <Panel $w={276} $pl={10} $gap={0}>
          <Button $w={212} />
          <Button $w={44} $h={26}><IconCheck /></Button>
        </Panel>
        <Panel $dark $w={726} $center><RegionText>VÁROSFÖLD ( 23 )</RegionText></Panel>
        <Panel $pl={11}>
          <OptionMenu>Objektum Menü<OptionMark /></OptionMenu>
          <IconButton $mr={8}><IconGrid /></IconButton>
          <IconButton $mr={6}><IconZoom /></IconButton>
          <IconButton><IconZoom plus /></IconButton>
        </Panel>
      </ThirdRow>
      <Middle>
        <Canvas><RailMap /></Canvas>
        <VScroll>
          <VArrow>▲</VArrow>
          <VThumb />
          <VArrow>▼</VArrow>
        </VScroll>
      </Middle>
      <HScroll>
        <HArrow>◀</HArrow>
        <HThumb />
        <HArrow>▶</HArrow>
      </HScroll>
      <Toolbar>
        <Button />
        <ZoomBox>
          <Slider><SliderThumb /><SliderThumb /></Slider>
          <ZoomLabel>zoom %</ZoomLabel>
        </ZoomBox>
        <Button><IconArrows /></Button>
      </Toolbar>
      <Log>
        <LogLines>
          {logLines.map((msg, i) => (
            <LogLine key={i}>
              <LogTime>06:3</LogTime>
              <LogMessage>{msg}</LogMessage>
            </LogLine>
          ))}
        </LogLines>
        <LogScroll><span>▲</span><span>▼</span></LogScroll>
      </Log>

      <Menu>
        <MenuItem $first $h={29}>Futó program leállítása</MenuItem>
        <MenuItem>Xgyros</MenuItem>
        <MenuItem $pressed $ls={-2.6}>Replayback</MenuItem>
      </Menu>

      <SideWidget>
        <SideButton>Át</SideButton>
        <SideArrow><IconBack /></SideArrow>
      </SideWidget>

      <Dialog>
        <DialogTitle>
          <DialogMenuBtn />
          <DialogTitleText>PlayBack Control</DialogTitleText>
        </DialogTitle>
        <DialogBody>
          <DialogLeft>
            <Stamp>2013-05-26 vasárnap 06.38.58</Stamp>
            <GroupRow>
              <Group $w={133} $pl={18} $gap={9}>
                <GroupLabel $l={9}>Vezérlés</GroupLabel>
                <TapeBtn><svg width="10" height="16"><polygon points="1,0 9,8 1,16" fill="#000" /></svg></TapeBtn>
                <TapeBtn><svg width="12" height="12"><rect width="12" height="12" fill="#000" /></svg></TapeBtn>
                <TapeBtn><svg width="12" height="16"><polygon points="1,0 8,8 1,16" fill="#000" /><rect x="9" width="3" height="16" fill="#000" /></svg></TapeBtn>
              </Group>
              <Group $w={89}>
                <GroupLabel $l={9}>Sebesség</GroupLabel>
                <Speed>10</Speed>
                <SpinCol>
                  <SpinBtn><svg width="9" height="8"><polygon points="4.5,0 9,8 0,8" fill="#000" /></svg></SpinBtn>
                  <SpinBtn><svg width="9" height="8"><polygon points="0,0 9,0 4.5,8" fill="#000" /></svg></SpinBtn>
                </SpinCol>
              </Group>
            </GroupRow>
          </DialogLeft>
          <DialogButtons>
            <DefaultRing><DlgButton $h={26}>Idö</DlgButton></DefaultRing>
            <DlgButton>Fájlok</DlgButton>
            <DlgButton>Súgó</DlgButton>
            <DlgButton>Bezár</DlgButton>
          </DialogButtons>
        </DialogBody>
      </Dialog>

      <InfoPanel>
        <InfoLeft>
          <InfoName $grow={32}>Városföld</InfoName>
          <InfoName $grow={33} />
        </InfoLeft>
        <InfoGrid>
          <StationCode $col="1 / 3" $row="1 / 3">TÜ-FH-02</StationCode>
          <InfoCell $c="#00ff00">TH</InfoCell>
          <InfoCell $c="#ff1010">JZ</InfoCell>
          <InfoCell $c="#00ff00">BJ</InfoCell>
          <LogCell>Zavarnapló</LogCell>
          <AlarmCell $col="7 / 9" $row="1 / 3"><AlarmBox>!!:!!:!!</AlarmBox></AlarmCell>
          <InfoCell $col={3} $row={2} $c="#00ff00" $fs={14} $thin>H</InfoCell>
          <InfoCell $col={4} $row={2} $c="#ff1010">VZ</InfoCell>
          <InfoCell $col={5} $row={2} $c="#00ff00">TJ</InfoCell>
          <LogCell $col={6} $row={2}>Egyéb naplók</LogCell>
          <InfoCell $col={1} $row={3} $c="#00ff00" $fs={13} $thin>I</InfoCell>
          <InfoCell $col={2} $row={3} $c="#ff1010">VT</InfoCell>
          <InfoCell $col={3} $row={3} $c="#00ff00">SZ</InfoCell>
          <InfoCell $col={4} $row={3} $c="#00ff00" $fs={11} $thin>ÁEZ</InfoCell>
          <InfoCell $col={5} $row={3} $c="#00ff00" $fs={12} $thin>ÁK</InfoCell>
          <LogCell $col="6 / 8" $row={3}>Fejrovatos napló</LogCell>
          <RedBlock>BH</RedBlock>
        </InfoGrid>
      </InfoPanel>

      <Terminal>
        <TermTitle>
          <TermBtn $mw={9} $mh={1} />
          <TermTitleText>root@sge_term6:~</TermTitleText>
          <TermBtn $mw={1} $mh={1} />
          <TermBtn $mw={8} $mh={8} />
        </TermTitle>
        <TermBody>
          <TermGutter><TermThumb /></TermGutter>
          <TermText>{termLines.join('\n')}</TermText>
        </TermBody>
      </Terminal>
    </Screen>
  );
}

export default App;
